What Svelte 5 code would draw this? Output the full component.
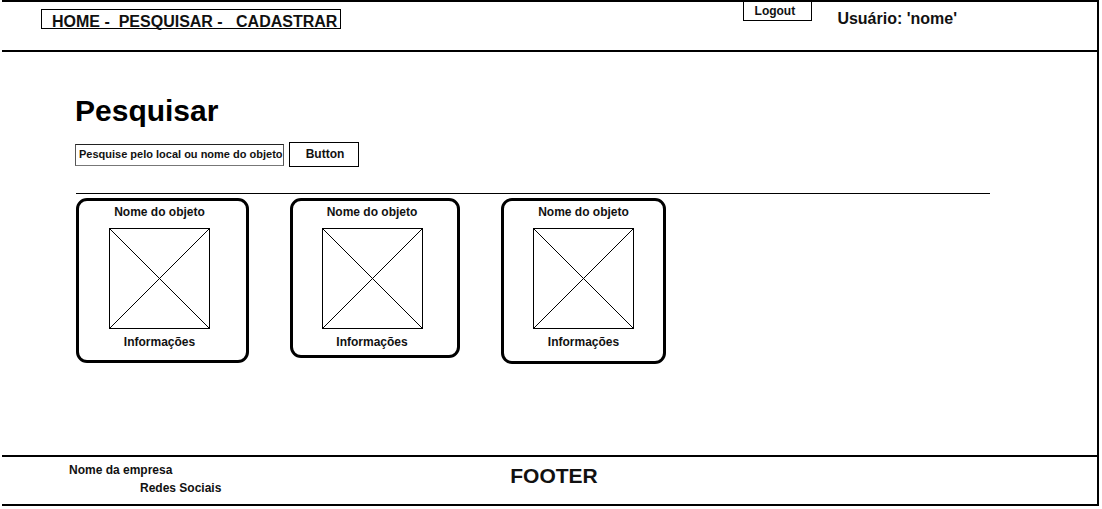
<script>
  const items = [
    { name: 'Nome do objeto', info: 'Informações', size: 'wide' },
    { name: 'Nome do objeto', info: 'Informações', size: 'short' },
    { name: 'Nome do objeto', info: 'Informações', size: 'narrow' }
  ];
  let query = $state('Pesquise pelo local ou nome do objeto');
</script>

<div class="page">
  <header>
    <nav><a href="#home">HOME</a>{' -  '}<a href="#pesquisar">PESQUISAR</a>{' -   '}<a href="#cadastrar">CADASTRAR</a></nav>
    <button class="logout" type="button">Logout</button>
    <span class="user">Usuário: 'nome'</span>
  </header>

  <main>
    <h1>Pesquisar</h1>
    <form onsubmit={(e) => e.preventDefault()}>
      <input type="text" aria-label="Pesquisar objeto" bind:value={query} />
      <button class="search" type="submit">Button</button>
    </form>
    <section class="results">
      {#each items as item}
        <article class={item.size}>
          <h2>{item.name}</h2>
          <svg viewBox="0 0 101 101" aria-hidden="true">
            <rect x="0.5" y="0.5" width="100" height="100" />
            <path d="M0.5 0.5L100.5 100.5M100.5 0.5L0.5 100.5" />
          </svg>
          <p>{item.info}</p>
        </article>
      {/each}
    </section>
  </main>

  <footer>
    <div class="company">
      <p>Nome da empresa</p>
      <p class="social">Redes Sociais</p>
    </div>
    <strong>FOOTER</strong>
  </footer>
</div>

<style>
  :global(body) {
    background: #fff;
  }

  .page,
  .page * {
    box-sizing: border-box;
  }

  .page {
    display: flex;
    flex-direction: column;
    min-height: calc(100vh - 3px);
    margin: 0 3px 0 2px;
    border: solid #000;
    border-width: 2px 2px 2px 0;
    color: #111;
    font: bold 12px/18px "Liberation Sans", Arial, sans-serif;
  }

  h1,
  h2,
  p {
    margin: 0;
    font-size: 12px;
  }

  button,
  input {
    margin: 0;
    border: 1px solid #000;
    border-radius: 0;
    background: #fff;
    color: inherit;
    font: inherit;
  }

  header {
    display: flex;
    align-items: flex-start;
    height: 50px;
    padding: 0 140px 0 39px;
    border-bottom: 2px solid #000;
    font-size: 16px;
  }

  nav {
    height: 20px;
    margin: 7px auto 0 0;
    padding: 0 3px 0 10px;
    border: 1px solid #000;
    line-height: 24px;
    white-space: pre;
  }

  a {
    color: inherit;
    text-decoration: none;
  }

  .logout {
    width: 69px;
    height: 19px;
    margin-right: 25px;
    padding: 0 6px 0 0;
    border-top: 0;
    font-size: 12px;
    line-height: 18px;
  }

  .user {
    margin-top: 7px;
    line-height: 20px;
  }

  main {
    flex: 1;
    padding: 41px 107px 40px 73px;
  }

  h1 {
    color: #000;
    font-size: 30px;
    line-height: 36px;
  }

  form {
    display: flex;
    align-items: center;
    gap: 5px;
    margin-top: 13px;
  }

  input {
    width: 209px;
    height: 22px;
    padding: 0 0 2px 3px;
    border-color: #222 #555 #777;
    font-size: 11px;
  }

  .search {
    width: 70px;
    height: 25px;
    padding: 0 0 2px 2px;
  }

  .results {
    display: flex;
    flex-wrap: wrap;
    align-items: flex-start;
    gap: 41px;
    margin: 26px 0 0 1px;
    padding-top: 4px;
    border-top: 1px solid #000;
  }

  article {
    display: flex;
    flex-direction: column;
    align-items: center;
    padding: 2px 6px 0 0;
    border: 3px solid #000;
    border-radius: 11px;
  }

  .wide {
    width: 173px;
    min-height: 165px;
  }

  .short {
    width: 170px;
    min-height: 160px;
  }

  .narrow {
    width: 165px;
    min-height: 166px;
    padding-right: 0;
  }

  svg {
    width: 101px;
    height: 101px;
    margin: 7px 0 4px;
    fill: none;
    stroke: #000;
  }

  footer {
    display: grid;
    grid-template-columns: 1fr auto 1fr;
    height: 49px;
    padding: 4px 58px 0 67px;
    border-top: 2px solid #000;
  }

  .social {
    padding-left: 71px;
  }

  strong {
    font-size: 21px;
    line-height: 30px;
  }
</style>
